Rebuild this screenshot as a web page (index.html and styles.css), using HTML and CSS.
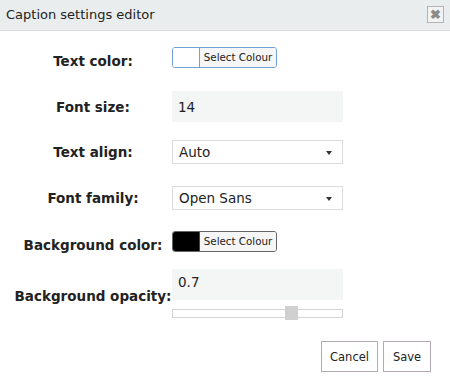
FILE: index.html
```html
<!DOCTYPE html>
<html lang="en">

<head>
	<meta charset="UTF-8">
	<meta name="viewport" content="width=device-width, initial-scale=1.0">
	<title>Caption settings editor</title>
	<link rel="stylesheet" href="styles.css">
</head>

<body>
	<div class="dialog">
		<div class="dialog-title">
			<span>Caption settings editor</span>
			<button class="close-button" title="Close">&#10006;</button>
		</div>

		<div class="settings">
			<div class="row row-text-color">
				<label>Text color:</label>
				<div class="colour-picker">
					<span class="swatch swatch-white"></span>
					<span class="colour-button">Select Colour</span>
				</div>
			</div>

			<div class="row row-font-size">
				<label for="fontSize">Font size:</label>
				<input type="text" id="fontSize" class="text-input" value="14">
			</div>

			<div class="row row-align">
				<label>Text align:</label>
				<div class="select"><span>Auto</span></div>
			</div>

			<div class="row row-family">
				<label>Font family:</label>
				<div class="select"><span>Open Sans</span></div>
			</div>

			<div class="row row-bg-color">
				<label>Background color:</label>
				<div class="colour-picker dark">
					<span class="swatch swatch-black"></span>
					<span class="colour-button">Select Colour</span>
				</div>
			</div>

			<div class="row row-opacity">
				<label for="bgOpacity">Background opacity:</label>
				<div class="opacity-control">
					<input type="text" id="bgOpacity" class="text-input" value="0.7">
					<div class="slider">
						<span class="slider-handle" style="left: 112px"></span>
					</div>
				</div>
			</div>
		</div>

		<div class="actions">
			<button class="action-button cancel-button">Cancel</button>
			<button class="action-button save-button">Save</button>
		</div>
	</div>
</body>

</html>
```

FILE: styles.css
```css
*,
*::before,
*::after {
	box-sizing: border-box
}

body {
	margin: 0;
	background-color: #ffffff;
	font-family: "DejaVu Sans", Verdana, sans-serif;
	color: #222;
}

.dialog {
	width: 450px;
	height: 377px;
}

.dialog-title {
	display: flex;
	align-items: center;
	justify-content: space-between;
	height: 31px;
	padding: 0 6px 1px 6px;
	background-color: #e9eded;
	border-bottom: 1px solid #d9dddd;
	font-size: 13px;
	color: #222;
}

.close-button {
	width: 17px;
	height: 17px;
	padding: 0;
	border: 1px solid #b4b4b4;
	background-color: #f3f3f3;
	color: #8a8a8a;
	font-size: 13px;
	line-height: 15px;
	font-weight: bold;
	cursor: pointer;
}

.settings {
	padding-left: 14px;
}

.row {
	display: grid;
	grid-template-columns: 158px 171px;
	align-items: center;
}

.row label {
	text-align: center;
	font-weight: bold;
	font-size: 13.5px;
	color: #222;
	white-space: nowrap;
}

.row-text-color {
	margin-top: 16px;
}

/* colour rows sit their label a little below the picker */
.row-text-color label,
.row-bg-color label {
	margin-top: 3.5px;
	margin-bottom: -3.5px;
}

.row-font-size {
	margin-top: 23px;
}

.row-align {
	margin-top: 18px;
}

.row-family {
	margin-top: 22px;
}

.row-bg-color {
	margin-top: 21px;
}

.row-opacity {
	margin-top: 17px;
}

.row-opacity label {
	padding-top: 1px;
}

.colour-picker {
	display: flex;
	width: 105px;
	height: 21px;
	border: 1px solid #6fa0d8;
	border-radius: 3px;
	overflow: hidden;
}

.colour-picker.dark {
	border-color: #666;
}

.swatch {
	width: 27px;
	border-right: 1px solid #999;
}

.swatch-white {
	background-color: #ffffff;
}

.swatch-black {
	background-color: #000000;
	border-right-color: #444;
}

.colour-button {
	flex: 1;
	background-color: #f6f6f6;
	font-size: 10.3px;
	line-height: 19px;
	text-align: center;
	color: #222;
}

.text-input {
	width: 171px;
	height: 31px;
	padding: 0 6px;
	border: none;
	background-color: #f4f5f5;
	font-family: inherit;
	font-size: 13.5px;
	color: #222;
}

.select {
	position: relative;
	width: 171px;
	height: 24px;
	padding: 0 6px;
	border: 1px solid #dcdcdc;
	background-color: #fff;
	font-size: 13.5px;
	line-height: 22px;
	color: #222;
}

.select::after {
	content: "";
	position: absolute;
	right: 10px;
	top: 10px;
	border-left: 3px solid transparent;
	border-right: 3px solid transparent;
	border-top: 4px solid #333;
}

.opacity-control {
	display: flex;
	flex-direction: column;
}

.opacity-control .text-input {
	padding-bottom: 6px;
}

.slider {
	position: relative;
	width: 171px;
	height: 9px;
	margin-top: 9px;
	margin-bottom: 3px;
	border: 1px solid #d4d4d4;
	background-color: #fff;
}

.slider-handle {
	position: absolute;
	top: -4px;
	width: 13px;
	height: 14px;
	background-color: #d0d0d0;
}

.actions {
	display: flex;
	justify-content: flex-end;
	gap: 5px;
	padding: 20px 19px 0 0;
}

.action-button {
	height: 31px;
	padding: 0;
	border: 1px solid #b3aab3;
	background-color: #fff;
	font-family: inherit;
	font-size: 11.5px;
	color: #222;
}

.cancel-button {
	width: 57px;
}

.save-button {
	width: 48px;
}
```
